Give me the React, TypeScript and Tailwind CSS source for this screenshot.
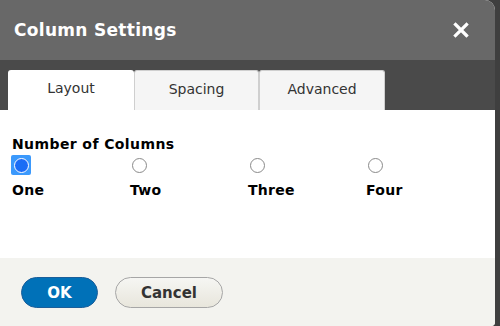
import React from "react";

function Radio({ checked }: { checked?: boolean }) {
  if (checked) {
    return (
      <div className="w-[20px] h-[20px] bg-[#3b99fc] flex items-center justify-center rounded-[2px]">
        <div className="w-[15px] h-[15px] rounded-full border-[1.5px] border-white bg-[#1e6cf7] flex items-center justify-center">
          <div className="w-[9px] h-[9px] rounded-full bg-[#1a6ef5]" />
        </div>
      </div>
    );
  }
  return (
    <div className="w-[20px] h-[20px] flex items-center justify-center">
      <div className="w-[15px] h-[15px] rounded-full border border-[#8a8a8a] bg-white" />
    </div>
  );
}

export default function App() {
  const opts = ["One", "Two", "Three", "Four"];
  return (
    <div
      className="w-[500px] h-[326px] bg-[#3f3f3f] flex"
      style={{ fontFamily: '"DejaVu Sans", "Open Sans", sans-serif' }}
    >
      <div className="w-[495px] h-[326px] flex flex-col rounded-tr-[10px] rounded-br-[4px] overflow-hidden bg-white">
        <div className="h-[60px] bg-[#686868] flex items-center justify-between pl-[14px] pr-[26px]">
          <span className="text-white font-bold text-[17px] tracking-[0.3px] pt-[2px]">Column Settings</span>
          <svg width="16" height="16" viewBox="0 0 16 16" className="mb-[1px]">
            <path d="M2.5 2.5 L13.5 13.5 M13.5 2.5 L2.5 13.5" stroke="white" strokeWidth="3.2" strokeLinecap="square" />
          </svg>
        </div>
        <div className="h-[50px] bg-[#4a4a4a] flex items-end pl-[8px]">
          <div className="w-[126px] h-[40px] bg-white rounded-t-[3px] flex items-center justify-center text-[14px] text-[#333] pb-[3px]">
            Layout
          </div>
          <div className="w-[125px] h-[40px] bg-[#f5f5f5] border border-b-0 border-[#cfcfcf] rounded-t-[3px] flex items-center justify-center text-[14px] text-[#333] pb-[3px]">
            Spacing
          </div>
          <div className="w-[126px] h-[40px] bg-[#f5f5f5] border border-b-0 border-[#cfcfcf] rounded-t-[3px] flex items-center justify-center text-[14px] text-[#333] pb-[3px]">
            Advanced
          </div>
        </div>
        <div className="h-[148px] bg-white pt-[25px] pl-[11px]">
          <div className="text-[14px] font-bold text-black leading-[18px] pl-[1px] tracking-[0.4px]">Number of Columns</div>
          <div className="flex mt-[2px]">
            {opts.map((o, i) => (
              <div key={o} className="w-[118px] flex flex-col">
                <Radio checked={i === 0} />
                <span className="text-[14px] font-bold text-black leading-[18px] mt-[6px] pl-[1px] tracking-[0.3px]">{o}</span>
              </div>
            ))}
          </div>
        </div>
        <div className="flex-1 bg-[#f3f3ef] flex items-start pt-[19px] pl-[21px] gap-[17px]">
          <button className="w-[77px] h-[31px] rounded-full bg-[#0071b8] border border-[#1a5e9a] text-white font-bold text-[15px] flex items-center justify-center pt-[1px]">
            OK
          </button>
          <button className="w-[108px] h-[31px] rounded-full bg-gradient-to-b from-[#f6f6f3] to-[#e8e6dc] border border-[#a6a6a6] text-[#333] font-bold text-[15px] flex items-center justify-center pt-[1px]">
            Cancel
          </button>
        </div>
      </div>
    </div>
  );
}
